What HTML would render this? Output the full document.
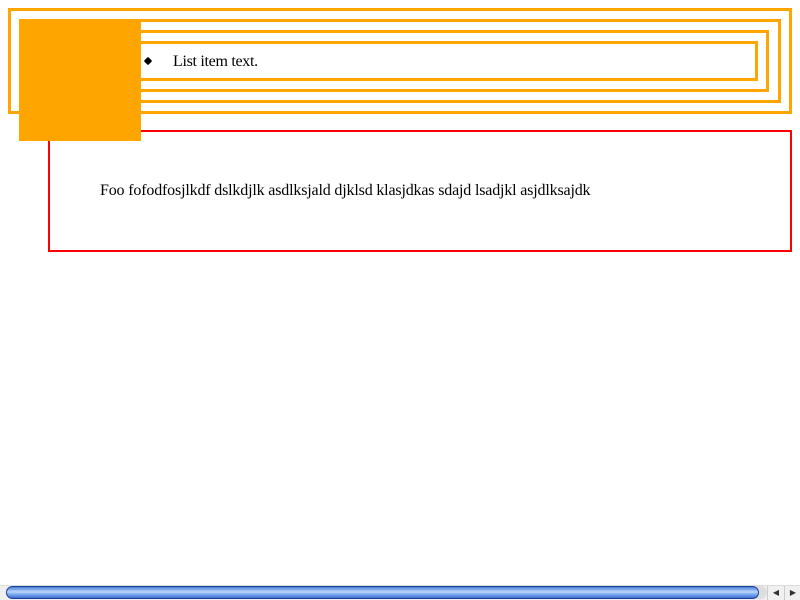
<!DOCTYPE html>
<html><head><style>
html,body{margin:0;padding:0;width:800px;height:600px;overflow:hidden;background:#fff;position:relative;font-family:"Liberation Serif",serif;font-size:16px}
.b{position:absolute;border:3px solid #ffa500;box-sizing:border-box}
</style></head><body>
<div class="b" style="left:8px;top:8px;width:784px;height:106px"></div>
<div class="b" style="left:19px;top:19px;width:762px;height:84px"></div>
<div class="b" style="left:30px;top:30px;width:739px;height:62px"></div>
<div class="b" style="left:41px;top:41px;width:717px;height:40px"></div>
<div style="position:absolute;left:145px;top:58px;width:6px;height:6px;transform:rotate(45deg);border-radius:1px;background:#000"></div>
<div style="position:absolute;left:173px;top:52px;line-height:20px;letter-spacing:-0.3px">List item text.</div>
<div style="position:absolute;left:48px;top:130px;width:744px;height:122px;border:2px solid red;box-sizing:border-box"></div>
<div style="position:absolute;left:100px;top:181px;line-height:20px;letter-spacing:-0.17px">Foo fofodfosjlkdf dslkdjlk asdlksjald djklsd klasjdkas sdajd lsadjkl asjdlksajdk</div>
<div style="position:absolute;left:19px;top:19px;width:122px;height:122px;background:#ffa500"></div>
<div style="position:absolute;left:0;top:585px;width:800px;height:15px;background:#f0f0f0;border-top:1px solid #ddd;box-sizing:border-box"></div>
<div style="position:absolute;left:6px;top:586px;width:761px;height:13px;border-radius:7px;background:#ddd"></div>
<div style="position:absolute;left:6px;top:586px;width:753px;height:13px;border-radius:7px;background:linear-gradient(#4a7fd6,#bcd6fb 45%,#8ab6f5 60%,#3d6fcf);border:1px solid #1b3f9b;box-sizing:border-box"></div>
<div style="position:absolute;left:767px;top:586px;width:16px;height:14px;border-left:1px solid #ccc;font-size:8px;text-align:center;line-height:14px;color:#333">◀</div>
<div style="position:absolute;left:784px;top:586px;width:16px;height:14px;border-left:1px solid #ccc;font-size:8px;text-align:center;line-height:14px;color:#333">▶</div>
</body></html>
